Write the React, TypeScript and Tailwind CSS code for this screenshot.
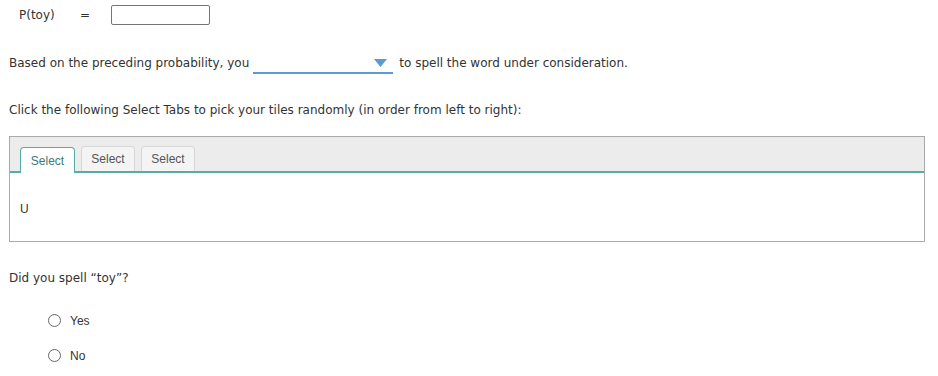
import React, { useState } from 'react';

const verdana = { fontFamily: '"DejaVu Sans", Verdana, sans-serif' };

export default function App() {
  const [tab, setTab] = useState(0);
  const [answer, setAnswer] = useState<string | null>(null);
  const tabs = ['Select', 'Select', 'Select'];

  return (
    <div className="w-[938px] h-[376px] bg-white text-[#333] text-[12px] overflow-hidden" style={verdana}>
      {/* probability input */}
      <div className="flex items-center h-[20px] mt-[5px] pl-[19px]">
        <span className="w-[61px]">P(toy)</span>
        <span className="w-[31px]">=</span>
        <div className="w-[99px] h-[20px] border border-[#767676] rounded-[2px] bg-white" />
      </div>

      {/* sentence with dropdown */}
      <div className="flex items-end mt-[29px] pl-[9px] h-[20px]">
        <span className="pb-[2px]">Based on the preceding probability, you</span>
        <div className="ml-[4px] w-[140px] h-[20px] border-b-2 border-[#5b9bd1] flex items-center justify-end pr-[6px]">
          <svg width="13" height="8" viewBox="0 0 13 8">
            <path d="M0 0 H13 L6.5 8 Z" fill="#5b9bd1" />
          </svg>
        </div>
        <span className="ml-[6px] pb-[2px]">to spell the word under consideration.</span>
      </div>

      <div className="mt-[27px] pl-[9px]">Click the following Select Tabs to pick your tiles randomly (in order from left to right):</div>

      {/* tab panel */}
      <div className="ml-[9px] mt-[17px] w-[916px] h-[106px] border border-[#aaa] flex flex-col">
        <div className="h-[36px] bg-[#ececec] border-b-2 border-[#5aaba6] flex items-end pl-[10px] gap-[6px]" style={{ fontFamily: '"Liberation Sans", Arial, sans-serif' }}>
          {tabs.map((t, i) => (
            <button
              key={i}
              onClick={() => setTab(i)}
              className={
                i === tab
                  ? 'h-[26px] w-[55px] -mb-[2px] bg-white border border-b-0 border-[#5aaba6] rounded-t-[4px] text-[#3d7a77] text-[12px]'
                  : 'h-[25px] w-[54px] bg-[#f4f4f4] border border-b-0 border-[#d8d8d8] rounded-t-[4px] text-[#555] text-[12px]'
              }
            >
              {t}
            </button>
          ))}
        </div>
        <div className="pl-[10px] pt-[27px] text-[12px]" style={{ fontFamily: '"Liberation Sans", Arial, sans-serif' }}>U</div>
      </div>

      <div className="mt-[27px] pl-[9px]">Did you spell “toy”?</div>

      <div className="pl-[48px] mt-[27px] flex flex-col gap-[22px]" style={{ fontFamily: '"Liberation Sans", Arial, sans-serif' }}>
        {['Yes', 'No'].map((o) => (
          <label key={o} className="flex items-center h-[13px] cursor-pointer" onClick={() => setAnswer(o)}>
            <span className="w-[13px] h-[13px] rounded-full border border-[#666] bg-white flex items-center justify-center">
              {answer === o && <span className="w-[7px] h-[7px] rounded-full bg-[#333]" />}
            </span>
            <span className="ml-[9px] text-[12px] text-[#333]">{o}</span>
          </label>
        ))}
      </div>
    </div>
  );
}
